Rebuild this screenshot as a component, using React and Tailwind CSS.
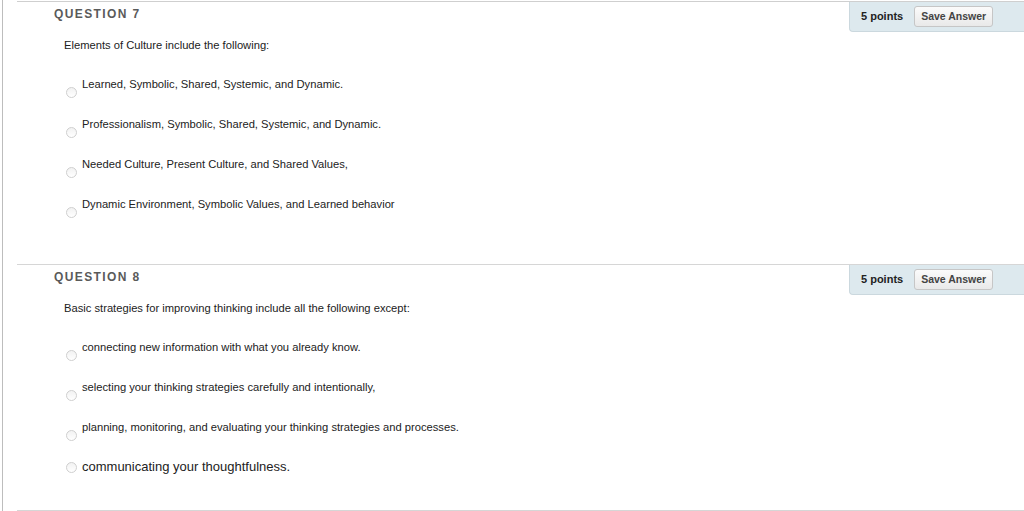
const questions = [
  {
    num: 7,
    prompt: "Elements of Culture include the following:",
    options: [
      "Learned, Symbolic, Shared, Systemic, and Dynamic.",
      "Professionalism, Symbolic, Shared, Systemic, and Dynamic.",
      "Needed Culture, Present Culture, and Shared Values,",
      "Dynamic Environment, Symbolic Values, and Learned behavior",
    ],
  },
  {
    num: 8,
    prompt: "Basic strategies for improving thinking include all the following except:",
    options: [
      "connecting new information with what you already know.",
      "selecting your thinking strategies carefully and intentionally,",
      "planning, monitoring, and evaluating your thinking strategies and processes.",
    ],
    last: "communicating your thoughtfulness.",
  },
];

function Radio({ className = "" }) {
  return (
    <span
      className={`block w-[11px] h-[11px] shrink-0 rounded-full border border-[#cfcfcf] bg-gradient-to-b from-[#f2f2f2] to-white ${className}`}
    />
  );
}

function PointsBox() {
  return (
    <div className="h-[30px] w-[175px] flex items-center pl-[11px] gap-[11px] bg-[#dde9ee] border-l border-b border-[#cbd8de] rounded-bl-[4px]">
      <span className="text-[11px] font-bold text-[#222]">5 points</span>
      <button className="h-[21px] w-[79px] rounded-[3px] border border-[#c6c6c6] bg-gradient-to-b from-[#fbfbfb] to-[#e9e9e9] text-[10.5px] font-bold text-[#444]">
        Save Answer
      </button>
    </div>
  );
}

function Question({ q, className }) {
  return (
    <div className={className}>
      <div className="flex justify-between items-start">
        <div className="ml-[37px] mt-[5px] text-[12px] leading-[14px] font-bold tracking-[1.4px] text-[#5a5a5a]">
          QUESTION {q.num}
        </div>
        <PointsBox />
      </div>
      <div className="ml-[47px] mt-[6px] text-[11.2px] leading-[14px] text-[#222]">{q.prompt}</div>
      <div className="ml-[49px] mt-[25px] flex flex-col gap-[19px]">
        {q.options.map((o) => (
          <div key={o} className="flex gap-[5px] items-start">
            <Radio className="mt-[10px]" />
            <span className="text-[11.2px] leading-[14px] text-[#222]">{o}</span>
          </div>
        ))}
        {q.last && (
          <div className="flex gap-[5px] items-center -mt-[1px]">
            <Radio />
            <span className="text-[13px] leading-[16px] text-[#222]">{q.last}</span>
          </div>
        )}
      </div>
    </div>
  );
}

export default function App() {
  return (
    <div
      className="w-[1024px] h-[511px] bg-white overflow-hidden pl-[2px]"
      style={{ fontFamily: '"Liberation Sans", Arial, sans-serif' }}
    >
      <div className="h-full border-l border-[#bdbdbd] pl-[14px] pt-px">
        <Question q={questions[0]} className="h-[263px] border-t border-[#cfcfcf]" />
        <Question q={questions[1]} className="h-[247px] border-t border-b border-[#d6d6d6]" />
      </div>
    </div>
  );
}
